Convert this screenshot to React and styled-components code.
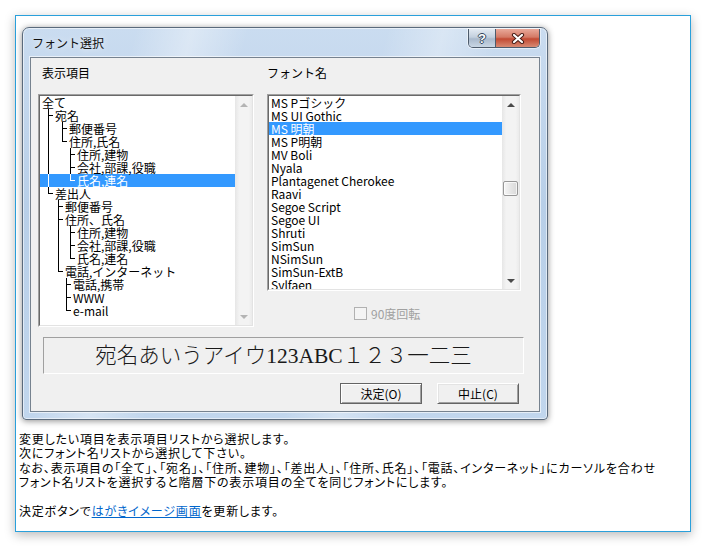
import React from "react";
import styled, { createGlobalStyle } from "styled-components";

const GlobalStyle = createGlobalStyle`
  html, body {
    margin: 0;
    padding: 0;
    background: #fff;
  }
  body {
    font-family: "Noto Sans CJK JP", "Liberation Sans", sans-serif;
    font-size: 12px;
    color: #000;
  }
`;

const Page = styled.div`
  padding: 15px;
`;

const Card = styled.div`
  box-sizing: border-box;
  width: 676px;
  height: 517px;
  border: 1px solid #2aa0db;
  background: #fff;
  box-shadow: 0 3px 10px rgba(0, 0, 0, 0.28);
  padding: 11px 3px 0;
`;

const Window = styled.div`
  box-sizing: border-box;
  width: 526px;
  height: 393px;
  margin-left: 3px;
  display: flex;
  flex-direction: column;
  padding: 0 7px 7px;
  border: 1px solid #5a6a7c;
  border-radius: 7px 7px 4px 4px;
  background:
    linear-gradient(105deg, transparent 18%, rgba(255, 255, 255, 0.35) 27%, transparent 36%,
      transparent 58%, rgba(255, 255, 255, 0.3) 67%, transparent 76%),
    linear-gradient(to bottom, #cadcf0, #b8cfe8 45%, #c1d6ed 100%);
  box-shadow: inset 0 0 0 1px rgba(255, 255, 255, 0.55), 0 1px 6px rgba(0, 0, 0, 0.45);
`;

const TitleBar = styled.div`
  height: 29px;
  display: flex;
  align-items: flex-start;
`;

const Title = styled.div`
  flex: 1;
  align-self: center;
  padding-left: 2px;
  font-size: 12px;
  line-height: 14px;
  color: #111;
  text-shadow: 0 0 6px rgba(255, 255, 255, 0.9);
`;

const CaptionGroup = styled.div`
  display: flex;
  margin-top: 1px;
  height: 18px;
  border: 1px solid #4d5b6c;
  border-top: none;
  border-radius: 0 0 5px 5px;
  overflow: hidden;
  box-shadow: 0 0 0 1px rgba(255, 255, 255, 0.5);
`;

const CaptionButton = styled.div`
  width: ${(p) => p.$w}px;
  display: flex;
  align-items: center;
  justify-content: center;
  background: ${(p) =>
    p.$close
      ? "linear-gradient(to bottom, #e9a99a, #d47a66 45%, #c24a33 55%, #d88a73)"
      : "linear-gradient(to bottom, #e3eaf2, #c3d0de 45%, #a9b9cc 55%, #c9d6e4)"};
  & + & {
    border-left: 1px solid #4d5b6c;
  }
`;

const HelpGlyph = styled.span`
  font-family: "Liberation Sans", sans-serif;
  font-weight: bold;
  font-size: 13px;
  line-height: 13px;
  color: #fff;
  text-shadow: -1px 0 #33455a, 1px 0 #33455a, 0 -1px #33455a, 0 1px #33455a;
`;

const Client = styled.div`
  flex: 1;
  display: flex;
  flex-direction: column;
  background: #f0f0f0;
  border: 1px solid #76828f;
  box-shadow: 0 0 0 1px rgba(255, 255, 255, 0.6);
  padding-top: 9px;
`;

const Columns = styled.div`
  display: grid;
  grid-template-columns: 216px 254px;
  column-gap: 13px;
  padding-left: 7px;
  align-items: start;
`;

const Column = styled.div`
  display: flex;
  flex-direction: column;
`;

const Label = styled.div`
  height: 12px;
  line-height: 12px;
  padding-left: ${(p) => p.$inset || 0}px;
  margin-bottom: 15px;
`;

const Sunken = styled.div`
  box-sizing: border-box;
  height: ${(p) => p.$h}px;
  border: 1px solid;
  border-color: #a0a0a0 #fff #fff #a0a0a0;
  display: flex;
`;

const ListInner = styled.div`
  flex: 1;
  display: flex;
  border: 1px solid;
  border-color: #696969 #e3e3e3 #e3e3e3 #696969;
  background: #fff;
  overflow: hidden;
`;

const Items = styled.div`
  flex: 1;
  overflow: hidden;
`;

const TreeRow = styled.div`
  display: flex;
  height: 13px;
  line-height: 13px;
  padding-left: ${(p) => p.$pad}px;
  white-space: nowrap;
  background: ${(p) => (p.$selected ? "#3399ff" : "transparent")};
  color: ${(p) => (p.$selected ? "#fff" : "#000")};
`;

const Guide = styled.span`
  position: relative;
  flex: none;
  width: ${(p) => p.$w}px;
  &::before {
    content: "";
    position: absolute;
    left: 0;
    top: 0;
    width: 1px;
    height: ${(p) => (p.$kind === "end" ? "7px" : "100%")};
    background: currentColor;
  }
  &::after {
    content: "";
    display: ${(p) => (p.$kind === "pipe" ? "none" : "block")};
    position: absolute;
    left: 0;
    top: 6px;
    width: calc(100% - 2px);
    height: 1px;
    background: currentColor;
  }
`;

const FontItem = styled.div`
  height: 13px;
  line-height: 13px;
  padding-left: 2px;
  white-space: nowrap;
  background: ${(p) => (p.$selected ? "#3399ff" : "transparent")};
  color: ${(p) => (p.$selected ? "#fff" : "#000")};
`;

const Bar = styled.div`
  width: 17px;
  flex: none;
  display: flex;
  flex-direction: column;
  background: linear-gradient(to right, #e6e6e6, #f3f3f3 25%, #f3f3f3 80%, #ebebeb);
`;

const ArrowBtn = styled.div`
  height: 17px;
  flex: none;
  display: flex;
  align-items: center;
  justify-content: center;
`;

const Arrow = styled.span`
  width: 0;
  height: 0;
  border-left: 4px solid transparent;
  border-right: 4px solid transparent;
  ${(p) => (p.$dir === "up" ? "border-bottom" : "border-top")}: 4px solid
    ${(p) => (p.$disabled ? "#b4b4b4" : "#4a4a4a")};
`;

const Track = styled.div`
  flex: 1;
`;

const Thumb = styled.div`
  box-sizing: border-box;
  width: 15px;
  height: 15px;
  margin: ${(p) => p.$offset}px 0 0 1px;
  border: 1px solid #979797;
  border-radius: 2px;
  background: linear-gradient(to right, #f6f6f6, #e6e6e6 50%, #d9d9d9);
  box-shadow: inset 0 0 0 1px rgba(255, 255, 255, 0.7);
`;

const CheckRow = styled.div`
  display: flex;
  align-items: center;
  gap: 4px;
  margin-top: 16px;
  padding-left: 87px;
  color: #a0a0a0;
  line-height: 13px;
`;

const CheckBox = styled.span`
  box-sizing: border-box;
  width: 13px;
  height: 13px;
  border: 1px solid #b1b1b1;
  background: #f4f4f4;
`;

const Preview = styled.div`
  box-sizing: border-box;
  width: 481px;
  height: 37px;
  margin: 10px 0 0 12px;
  border: 1px solid;
  border-color: #a0a0a0 #fff #fff #a0a0a0;
  display: flex;
  align-items: center;
  justify-content: center;
  font-family: "Liberation Serif", "Noto Sans CJK JP", serif;
  font-size: 21.5px;
  font-weight: 300;
  color: #1a1a1a;
  line-height: 30px;
  white-space: nowrap;
`;

const ButtonRow = styled.div`
  display: flex;
  justify-content: flex-end;
  gap: 15px;
  margin-top: 9px;
  padding-right: 20px;
`;

const Button = styled.div`
  box-sizing: border-box;
  width: 82px;
  height: 21px;
  display: flex;
  align-items: center;
  justify-content: center;
  background: #f0f0f0;
  border: 1px solid;
  border-color: ${(p) => (p.$default ? "#646464" : "#fff #646464 #646464 #fff")};
  box-shadow: ${(p) =>
    p.$default
      ? "inset 1px 1px #fff, inset -1px -1px #a0a0a0"
      : "inset 1px 1px #e3e3e3, inset -1px -1px #a0a0a0"};
  line-height: 13px;
`;

const Notes = styled.div`
  margin-top: 12px;
  line-height: 14.4px;
  font-feature-settings: "palt";
  letter-spacing: 0.8px;
  white-space: nowrap;
`;

const Link = styled.a`
  color: #0066cc;
  text-decoration: underline;
`;

const treeRows = [
  { g: [], t: "全て" },
  { g: [[8, "tee"]], t: "宛名" },
  { g: [[8, "pipe"], [22, "tee"]], t: "郵便番号" },
  { g: [[8, "pipe"], [22, "end"]], t: "住所,氏名" },
  { g: [[8, "pipe"], [30, "tee"]], t: "住所,建物" },
  { g: [[8, "pipe"], [30, "tee"]], t: "会社,部課,役職" },
  { g: [[8, "pipe"], [30, "end"]], t: "氏名,連名", sel: true },
  { g: [[8, "end"]], t: "差出人" },
  { g: [[18, "tee"]], t: "郵便番号" },
  { g: [[18, "tee"]], t: "住所、氏名" },
  { g: [[18, "pipe"], [30, "tee"]], t: "住所,建物" },
  { g: [[18, "pipe"], [30, "tee"]], t: "会社,部課,役職" },
  { g: [[18, "pipe"], [30, "end"]], t: "氏名,連名" },
  { g: [[18, "end"]], t: "電話,インターネット" },
  { g: [[26, "tee"]], t: "電話,携帯" },
  { g: [[26, "tee"]], t: "WWW" },
  { g: [[26, "end"]], t: "e-mail" },
];

const fonts = [
  "MS Pゴシック",
  "MS UI Gothic",
  "MS 明朝",
  "MS P明朝",
  "MV Boli",
  "Nyala",
  "Plantagenet Cherokee",
  "Raavi",
  "Segoe Script",
  "Segoe UI",
  "Shruti",
  "SimSun",
  "NSimSun",
  "SimSun-ExtB",
  "Sylfaen",
];

const ScrollBar = ({ disabled, thumbAt }) => (
  <Bar>
    <ArrowBtn>
      <Arrow $dir="up" $disabled={disabled} />
    </ArrowBtn>
    <Track>{thumbAt != null && <Thumb $offset={thumbAt} />}</Track>
    <ArrowBtn>
      <Arrow $dir="down" $disabled={disabled} />
    </ArrowBtn>
  </Bar>
);

const CloseIcon = () => (
  <svg width="14" height="11" viewBox="0 0 14 11">
    <path d="M3 2 L11 9 M11 2 L3 9" stroke="#4a1f18" strokeWidth="4.2" strokeLinecap="round" />
    <path d="M3 2 L11 9 M11 2 L3 9" stroke="#fff" strokeWidth="2.2" strokeLinecap="round" />
  </svg>
);

export default function App() {
  return (
    <Page>
      <GlobalStyle />
      <Card>
        <Window>
          <TitleBar>
            <Title>フォント選択</Title>
            <CaptionGroup>
              <CaptionButton $w={26}>
                <HelpGlyph>?</HelpGlyph>
              </CaptionButton>
              <CaptionButton $w={43} $close>
                <CloseIcon />
              </CaptionButton>
            </CaptionGroup>
          </TitleBar>
          <Client>
            <Columns>
              <Column>
                <Label $inset={4}>表示項目</Label>
                <Sunken $h={233}>
                  <ListInner>
                    <Items>
                      {treeRows.map((row, i) => (
                        <TreeRow key={i} $pad={row.g.length ? row.g[0][0] : 2} $selected={row.sel}>
                          {row.g.map(([pos, kind], j) => (
                            <Guide
                              key={j}
                              $kind={kind}
                              $w={j < row.g.length - 1 ? row.g[j + 1][0] - pos : 7}
                            />
                          ))}
                          <span>{row.t}</span>
                        </TreeRow>
                      ))}
                    </Items>
                    <ScrollBar disabled />
                  </ListInner>
                </Sunken>
              </Column>
              <Column>
                <Label>フォント名</Label>
                <Sunken $h={197}>
                  <ListInner>
                    <Items>
                      {fonts.map((f, i) => (
                        <FontItem key={f} $selected={i === 2}>
                          {f}
                        </FontItem>
                      ))}
                    </Items>
                    <ScrollBar thumbAt={68} />
                  </ListInner>
                </Sunken>
                <CheckRow>
                  <CheckBox />
                  <span>90度回転</span>
                </CheckRow>
              </Column>
            </Columns>
            <Preview>宛名あいうアイウ123ABC１２３一二三</Preview>
            <ButtonRow>
              <Button $default>決定(O)</Button>
              <Button>中止(C)</Button>
            </ButtonRow>
          </Client>
        </Window>
        <Notes>
          変更したい項目を表示項目リストから選択します。
          <br />
          次にフォント名リストから選択して下さい。
          <br />
          なお、表示項目の「全て」、「宛名」、「住所、建物」、「差出人」、「住所、氏名」、「電話、インターネット」にカーソルを合わせ
          <br />
          フォント名リストを選択すると階層下の表示項目の全てを同じフォントにします。
          <br />
          <br />
          決定ボタンで<Link href="#">はがきイメージ画面</Link>を更新します。
        </Notes>
      </Card>
    </Page>
  );
}
